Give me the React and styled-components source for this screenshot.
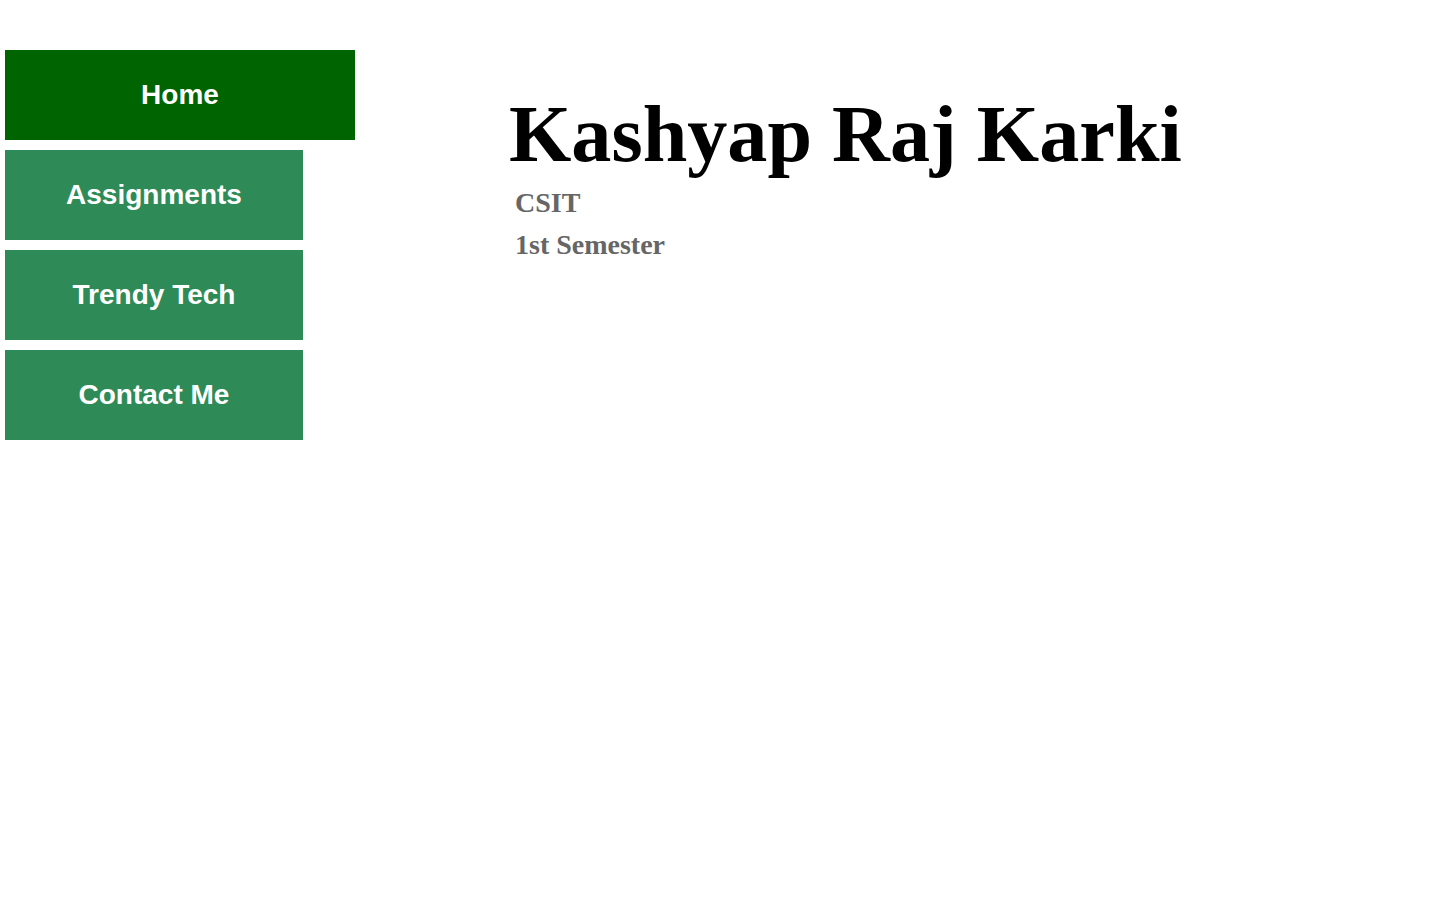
import React from "react";
import styled, { createGlobalStyle } from "styled-components";

const Global = createGlobalStyle`
  html, body { margin: 0; padding: 0; background: #ffffff; }
  * { box-sizing: border-box; }
`;

const Page = styled.div`
  display: flex;
  align-items: flex-start;
  min-height: 900px;
  padding: 50px 0 0 5px;
`;

const Nav = styled.nav`
  display: flex;
  flex-direction: column;
  align-items: flex-start;
  gap: 10px;
  width: 350px;
  flex: none;
`;

const NavItem = styled.a`
  display: flex;
  align-items: center;
  justify-content: center;
  width: ${(p) => (p.$active ? "350px" : "298px")};
  height: 90px;
  background: ${(p) => (p.$active ? "#006400" : "#2e8b57")};
  color: #ffffff;
  font-family: "Liberation Sans", Arial, sans-serif;
  font-weight: bold;
  font-size: 28px;
  text-decoration: none;
  cursor: pointer;
`;

const Main = styled.main`
  margin-left: 154px;
  padding-top: 40px;
  display: flex;
  flex-direction: column;
`;

const Name = styled.h1`
  margin: 0;
  font-family: "Liberation Serif", "Times New Roman", serif;
  font-weight: bold;
  font-size: 80.2px;
  line-height: 88px;
  color: #000000;
  white-space: nowrap;
`;

const Details = styled.div`
  display: flex;
  flex-direction: column;
  padding-left: 6px;
  margin-top: 4px;
`;

const Detail = styled.p`
  margin: 0;
  font-family: "Liberation Serif", "Times New Roman", serif;
  font-weight: bold;
  font-size: 28px;
  line-height: 42px;
  color: #666666;
`;

const links = [
  { label: "Home", active: true },
  { label: "Assignments" },
  { label: "Trendy Tech" },
  { label: "Contact Me" },
];

export default function App() {
  return (
    <>
      <Global />
      <Page>
        <Nav>
          {links.map((l) => (
            <NavItem key={l.label} $active={l.active}>
              {l.label}
            </NavItem>
          ))}
        </Nav>
        <Main>
          <Name>Kashyap Raj Karki</Name>
          <Details>
            <Detail>CSIT</Detail>
            <Detail>1st Semester</Detail>
          </Details>
        </Main>
      </Page>
    </>
  );
}
